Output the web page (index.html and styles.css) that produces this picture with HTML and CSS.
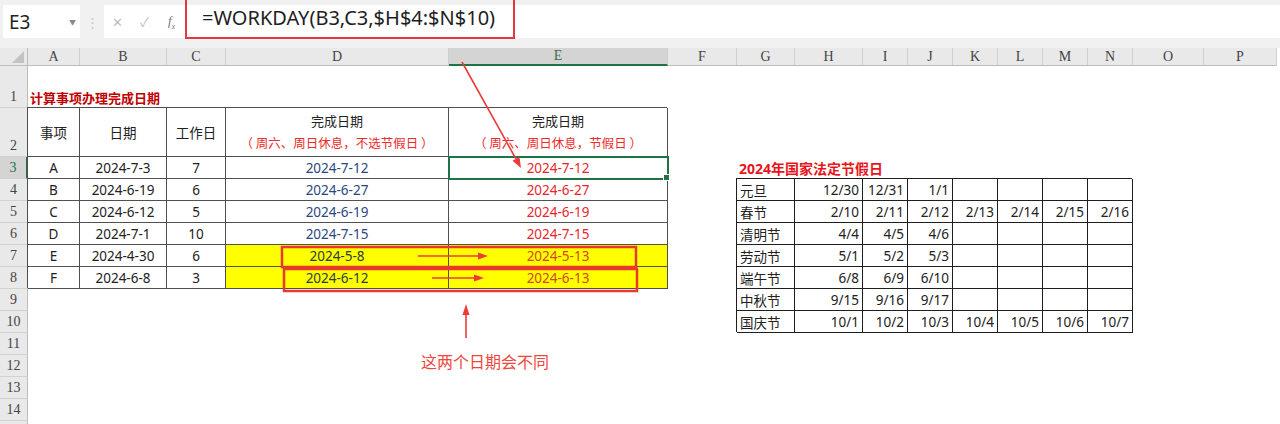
FILE: index.html
```html
<!DOCTYPE html>
<html lang="zh-CN">
<head>
<meta charset="utf-8">
<title>WORKDAY</title>
<link rel="stylesheet" href="styles.css">
</head>
<body>
<div class="app">
  <div class="toolbar">
    <div class="namebox"><span>E3</span><span class="dd">&#9660;</span></div>
    <div class="grip">&#8942;</div>
    <div class="fbar">
      <div class="ficons"><span class="ic">&#10005;</span><span class="ic">&#10003;</span><span class="ic fxi">f<sub>x</sub></span></div>
      <div class="formula">=WORKDAY(B3,C3,$H$4:$N$10)</div>
    </div>
  </div>
  <div class="sheet">
    <div class="corner"><div class="tri"></div></div>
    <div class="ch">A</div><div class="ch">B</div><div class="ch">C</div><div class="ch">D</div><div class="ch on">E</div><div class="ch">F</div><div class="ch">G</div><div class="ch">H</div><div class="ch">I</div><div class="ch">J</div><div class="ch">K</div><div class="ch">L</div><div class="ch">M</div><div class="ch">N</div><div class="ch">O</div><div class="ch">P</div>

    <div class="rowhdrs">
      <div class="rh h42">1</div>
      <div class="rh h49">2</div>
      <div class="rh sel">3</div>
      <div class="rh">4</div>
      <div class="rh">5</div>
      <div class="rh">6</div>
      <div class="rh">7</div>
      <div class="rh">8</div>
      <div class="rh">9</div>
      <div class="rh">10</div>
      <div class="rh">11</div>
      <div class="rh">12</div>
      <div class="rh">13</div>
      <div class="rh">14</div>
      <div class="rh"></div>
    </div>

    <div class="title1">计算事项办理完成日期</div>

    <div class="mt">
      <div class="c">事项</div>
      <div class="c">日期</div>
      <div class="c">工作日</div>
      <div class="c two"><span>完成日期</span><span class="red">（ 周六、周日休息，不选节假日 ）</span></div>
      <div class="c two"><span>完成日期</span><span class="red">（ 周六、周日休息，节假日 ）</span></div>

      <div class="c">A</div><div class="c">2024-7-3</div><div class="c">7</div><div class="c d">2024-7-12</div><div class="c e sel">2024-7-12</div>
      <div class="c">B</div><div class="c">2024-6-19</div><div class="c">6</div><div class="c d">2024-6-27</div><div class="c e">2024-6-27</div>
      <div class="c">C</div><div class="c">2024-6-12</div><div class="c">5</div><div class="c d">2024-6-19</div><div class="c e">2024-6-19</div>
      <div class="c">D</div><div class="c">2024-7-1</div><div class="c">10</div><div class="c d">2024-7-15</div><div class="c e">2024-7-15</div>
      <div class="c">E</div><div class="c">2024-4-30</div><div class="c">6</div><div class="c d yel">2024-5-8</div><div class="c e yel">2024-5-13</div>
      <div class="c">F</div><div class="c">2024-6-8</div><div class="c">3</div><div class="c d yel">2024-6-12</div><div class="c e yel">2024-6-13</div>
    </div>

    <div class="title2">2024年国家法定节假日</div>

    <div class="ht">
      <div class="h l">元旦</div><div class="h">12/30</div><div class="h">12/31</div><div class="h">1/1</div><div class="h"></div><div class="h"></div><div class="h"></div><div class="h"></div>
      <div class="h l">春节</div><div class="h">2/10</div><div class="h">2/11</div><div class="h">2/12</div><div class="h">2/13</div><div class="h">2/14</div><div class="h">2/15</div><div class="h">2/16</div>
      <div class="h l">清明节</div><div class="h">4/4</div><div class="h">4/5</div><div class="h">4/6</div><div class="h"></div><div class="h"></div><div class="h"></div><div class="h"></div>
      <div class="h l">劳动节</div><div class="h">5/1</div><div class="h">5/2</div><div class="h">5/3</div><div class="h"></div><div class="h"></div><div class="h"></div><div class="h"></div>
      <div class="h l">端午节</div><div class="h">6/8</div><div class="h">6/9</div><div class="h">6/10</div><div class="h"></div><div class="h"></div><div class="h"></div><div class="h"></div>
      <div class="h l">中秋节</div><div class="h">9/15</div><div class="h">9/16</div><div class="h">9/17</div><div class="h"></div><div class="h"></div><div class="h"></div><div class="h"></div>
      <div class="h l">国庆节</div><div class="h">10/1</div><div class="h">10/2</div><div class="h">10/3</div><div class="h">10/4</div><div class="h">10/5</div><div class="h">10/6</div><div class="h">10/7</div>
    </div>
  </div>

  <svg class="overlay" width="1280" height="424" viewBox="0 0 1280 424">
    <g fill="none" stroke="#e8392e" stroke-width="2.5">
      <rect x="282" y="247" width="354" height="20"/>
      <rect x="284" y="269" width="353" height="22"/>
    </g>
    <g stroke="#ee3b36" stroke-width="1.6" fill="#ee3b36">
      <line x1="418" y1="256" x2="480" y2="256"/>
      <polygon points="488,256 478,252.5 478,259.5" stroke="none"/>
      <line x1="432" y1="278" x2="476" y2="278"/>
      <polygon points="484,278 474,274.5 474,281.5" stroke="none"/>
      <line x1="462" y1="62" x2="516" y2="159"/>
      <polygon points="521,168 519.5,157 512.5,160.8" stroke="none"/>
      <line x1="466" y1="338" x2="466" y2="313"/>
      <polygon points="466,304 462.5,315 469.5,315" stroke="none"/>
    </g>
  </svg>
  <div class="note">这两个日期会不同</div>
</div>
</body>
</html>
```
FILE: styles.css
```css
* { box-sizing: border-box; margin: 0; padding: 0; }
html, body { width: 1280px; height: 424px; overflow: hidden; background: #fff; }
body { font-family: "Noto Sans", "Noto Sans CJK SC", sans-serif; color: #222; }
.app { position: relative; width: 1280px; height: 424px; }

.toolbar { height: 48px; background: #f1f1f1; display: flex; align-items: flex-start; padding-top: 5px; }
.namebox { margin-left: 3px; width: 77px; height: 33px; background: #fff; display: flex; align-items: center; justify-content: space-between; padding: 0 4px 0 6px; font-size: 19px; color: #222; }
.namebox .dd { font-size: 7px; color: #8a8a8a; }
.grip { width: 24px; height: 33px; display: flex; align-items: center; justify-content: center; color: #c9c9c9; font-size: 13px; }
.fbar { flex: 1; height: 33px; background: #fff; display: flex; align-items: center; }
.ficons { width: 81px; display: flex; align-items: center; }
.ic { width: 27px; text-align: center; color: #bdbdbd; font-size: 13px; }
.fxi { font-family: "Liberation Serif", serif; font-style: italic; color: #777; font-size: 13px; }
.fxi sub { font-size: 8px; }
.formula { margin-top: -8px; height: 43px; width: 330px; border: 2px solid #e4393c; padding-left: 15px; display: flex; align-items: center; font-size: 20px; color: #1e1e1e; }

.sheet { display: grid; grid-template-columns: 28px 52px 87px 59px 223px 219px 69px 58px 68px repeat(6, 45px) 71px 73px 3px; grid-template-rows: 18px 42px 49px repeat(12, 22px) 22px; }
.corner { background: #e9e9e9; border-right: 1px solid #bdbdbd; border-bottom: 1px solid #bdbdbd; position: relative; }
.tri { position: absolute; right: 3px; bottom: 2px; width: 12px; height: 12px; background: #c2c2c2; clip-path: polygon(100% 0, 100% 100%, 0 100%); }
.ch { background: #e9e9e9; border-right: 1px solid #cfcfcf; border-bottom: 1px solid #bdbdbd; font-family: "Liberation Serif", serif; font-size: 14px; color: #444; display: flex; align-items: center; justify-content: center; }
.ch.on { background: #d4d4d4; border-bottom: 2px solid #217346; color: #3f6e50; }

.rowhdrs { grid-column: 1; grid-row: 2 / span 15; display: flex; flex-direction: column; }
.rh { height: 22px; flex: none; background: #e9e9e9; border-bottom: 1px solid #d2d2d2; border-right: 1px solid #bdbdbd; font-family: "Liberation Serif", serif; font-size: 14px; color: #444; display: flex; align-items: flex-end; justify-content: center; padding-bottom: 2px; }
.rh.h42 { height: 42px; }
.rh.h49 { height: 49px; }
.rh.sel { background: #d4d4d4; color: #217346; border-right: 2px solid #217346; }

.title1 { grid-column: 2 / 6; grid-row: 2; align-self: end; padding: 0 0 1px 2px; font-size: 13px; font-weight: bold; color: #c00000; font-family: "Noto Sans CJK SC", sans-serif; }
.title2 { grid-column: 8 / 14; grid-row: 4; align-self: center; padding-left: 2px; font-size: 14px; font-weight: bold; color: #e8141c; font-family: "Noto Sans", "Noto Sans CJK SC", sans-serif; }

.mt { grid-column: 2 / 7; grid-row: 3 / 10; display: grid; grid-template-columns: 52px 87px 59px 223px 219px; grid-template-rows: 49px repeat(6, 22px); box-shadow: -1px -1px 0 #505050; }
.c { border-right: 1px solid #505050; border-bottom: 1px solid #505050; display: flex; align-items: center; justify-content: center; font-size: 13.5px; color: #222; white-space: nowrap; }
.c.two { flex-direction: column; line-height: 21px; font-size: 13px; }
.red { color: #ee2b2b; font-family: "Noto Sans CJK SC", sans-serif; font-size: 12.5px; white-space: pre; }
.c.d { color: #2b4680; }
.c.e { color: #e8262a; }
.c.yel { background: #ffff00; }
.c.d.yel { color: #2e3a40; }
.c.e.yel { color: #d2461c; }
.c.sel { position: relative; outline: 2px solid #217346; outline-offset: -1px; z-index: 2; }
.c.sel::after { content: ""; position: absolute; right: -3px; bottom: -3px; width: 5px; height: 5px; background: #217346; border: 1px solid #fff; }

.ht { grid-column: 8 / 16; grid-row: 5 / 12; display: grid; grid-template-columns: 58px 68px repeat(6, 45px); grid-template-rows: repeat(7, 22px); box-shadow: -1px -1px 0 #1e1e1e; }
.h { border-right: 1px solid #1e1e1e; border-bottom: 1px solid #1e1e1e; display: flex; align-items: center; justify-content: flex-end; padding-right: 3px; font-size: 13.5px; color: #222; white-space: nowrap; }
.h.l { justify-content: flex-start; padding: 0 0 0 3px; }

.overlay { position: absolute; left: 0; top: 0; pointer-events: none; z-index: 5; }
.note { position: absolute; left: 421px; top: 349px; font-size: 16px; color: #f0463c; font-family: "Noto Sans CJK SC", sans-serif; z-index: 5; }
```
